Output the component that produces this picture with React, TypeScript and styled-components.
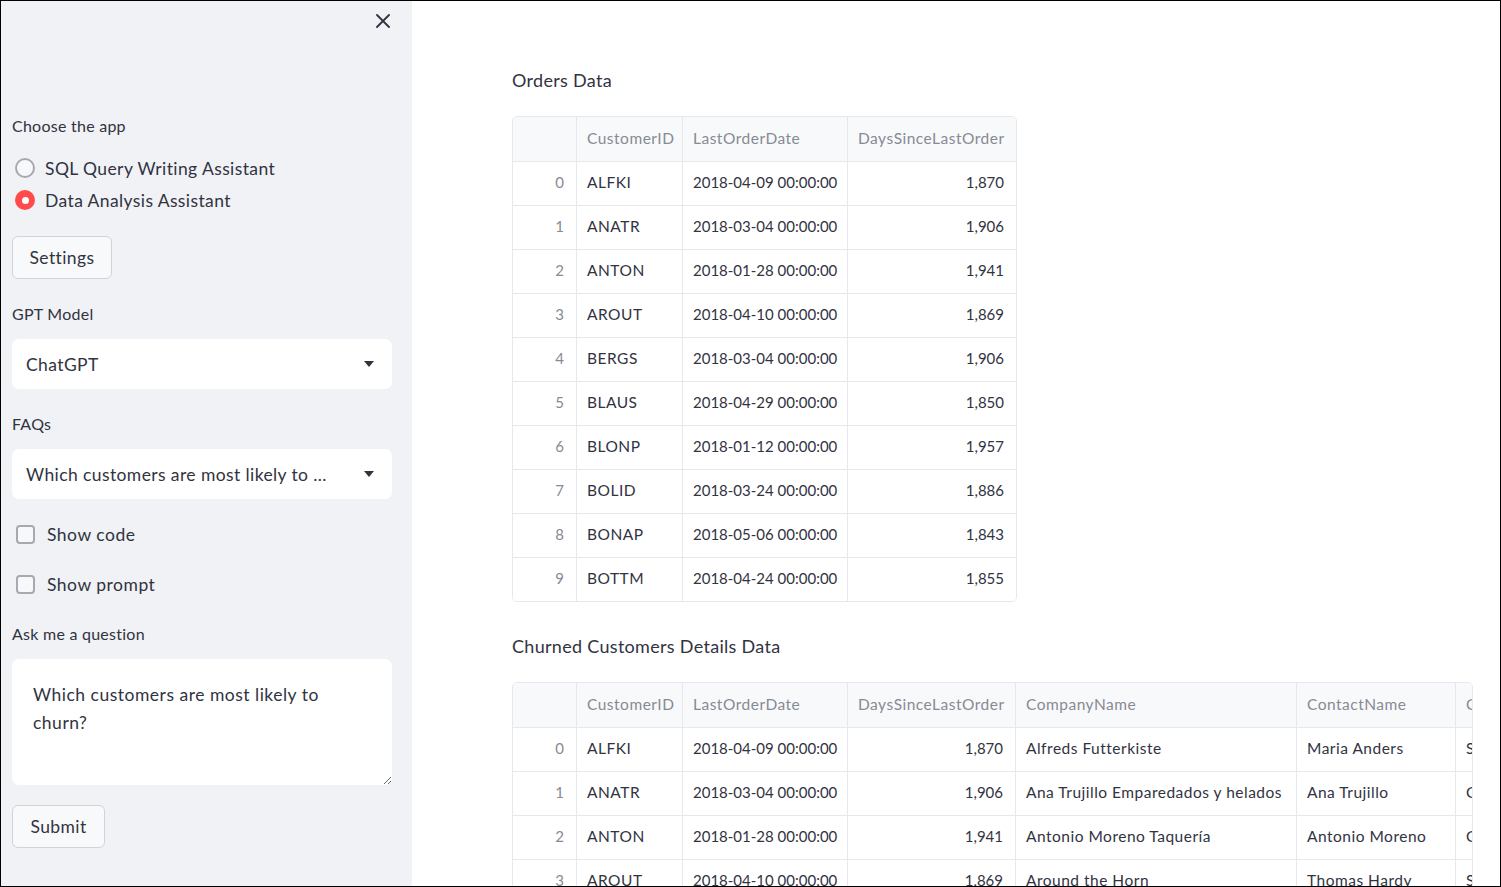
import React from "react";
import styled, { createGlobalStyle } from "styled-components";

const Global = createGlobalStyle`
  html, body { margin: 0; padding: 0; }
  body {
    height: 887px;
    box-sizing: border-box;
    border: 1px solid #000;
    overflow: hidden;
    font-family: Lato, "Noto Sans", sans-serif;
    color: #31333f;
    background: #fff;
  }
  #root { height: 100%; }
`;

const Shell = styled.div`
  display: flex;
  height: 100%;
`;

const Sidebar = styled.aside`
  width: 411px;
  flex: none;
  background: #f0f2f6;
  box-sizing: border-box;
  padding: 0 20px 0 11px;
  display: flex;
  flex-direction: column;
`;

const CloseRow = styled.div`
  display: flex;
  justify-content: flex-end;
  height: 115px;
  padding-top: 13px;
  padding-right: 2px;
  box-sizing: border-box;
`;

const CloseBtn = styled.button`
  border: 0;
  background: transparent;
  padding: 0;
  width: 14px;
  height: 14px;
  color: #31333f;
  display: flex;
`;

const Label = styled.div<{ $mt?: number }>`
  font-size: 16px;
  letter-spacing: 0.25px;
  line-height: 20px;
  margin-top: ${(p) => p.$mt ?? 0}px;
  color: #31333f;
`;

const RadioGroup = styled.div`
  margin-top: 16px;
  display: flex;
  flex-direction: column;
`;

const RadioRow = styled.label`
  display: flex;
  align-items: center;
  height: 32px;
  gap: 10px;
  padding-left: 3px;
  font-size: 17.5px;
  letter-spacing: 0.4px;
`;

const RadioDot = styled.span<{ $on?: boolean }>`
  width: 20px;
  height: 20px;
  box-sizing: border-box;
  border-radius: 50%;
  flex: none;
  display: flex;
  align-items: center;
  justify-content: center;
  background: ${(p) => (p.$on ? "#ff4b4b" : "#f7f8fa")};
  border: ${(p) => (p.$on ? "none" : "2px solid #a7a9b1")};
  &::after {
    content: "";
    display: ${(p) => (p.$on ? "block" : "none")};
    width: 7px;
    height: 7px;
    border-radius: 50%;
    background: #fff;
  }
`;

const Button = styled.button<{ $mt: number; $w: number }>`
  margin-top: ${(p) => p.$mt}px;
  width: ${(p) => p.$w}px;
  height: 43px;
  box-sizing: border-box;
  border: 1px solid #d1d3d8;
  border-radius: 6px;
  background: #f8f9fb;
  font-family: inherit;
  font-size: 17.5px;
  letter-spacing: 0.4px;
  color: #31333f;
  padding: 0;
`;

const Select = styled.div<{ $mt: number }>`
  margin-top: ${(p) => p.$mt}px;
  height: 50px;
  background: #fff;
  border-radius: 7px;
  display: flex;
  align-items: center;
  padding: 0 18px 0 14px;
  gap: 33px;
  font-size: 17.5px;
  letter-spacing: 0.4px;
`;

const SelectValue = styled.span`
  flex: 1;
  min-width: 0;
  white-space: nowrap;
  overflow: hidden;
  text-overflow: ellipsis;
`;

const Caret = styled.span`
  width: 0;
  height: 0;
  flex: none;
  border-left: 5.5px solid transparent;
  border-right: 5.5px solid transparent;
  border-top: 6px solid #31333f;
`;

const CheckRow = styled.label<{ $mt: number }>`
  margin-top: ${(p) => p.$mt}px;
  display: flex;
  align-items: center;
  height: 28px;
  padding-left: 4px;
  gap: 12px;
  font-size: 17.5px;
  letter-spacing: 0.5px;
`;

const CheckBox = styled.span`
  width: 19px;
  height: 19px;
  box-sizing: border-box;
  border: 2px solid #a7a9b1;
  border-radius: 4px;
  background: #f7f8fa;
  flex: none;
`;

const TextArea = styled.textarea`
  margin-top: 15px;
  height: 126px;
  box-sizing: border-box;
  border: 0;
  border-radius: 7px;
  background: #fff;
  padding: 22px 40px 10px 21px;
  font-family: inherit;
  font-size: 17.5px;
  letter-spacing: 0.5px;
  line-height: 28px;
  color: #31333f;
  resize: vertical;
  outline: none;
`;

const Main = styled.main`
  flex: 1;
  min-width: 0;
  padding: 65px 28px 0 100px;
  display: flex;
  flex-direction: column;
`;

const Heading = styled.div<{ $mt: number }>`
  margin-top: ${(p) => p.$mt}px;
  font-size: 18px;
  letter-spacing: 0.3px;
  line-height: 28px;
  color: #31333f;
`;

const TableWrap = styled.div<{ $w?: number }>`
  margin-top: 22px;
  border: 1px solid #e6e8ed;
  border-radius: 5px;
  overflow: hidden;
  width: ${(p) => (p.$w ? `${p.$w}px` : "fit-content")};
  flex: none;
`;

const Row = styled.div<{ $cols: string; $head?: boolean }>`
  display: grid;
  grid-template-columns: ${(p) => p.$cols};
  height: 44px;
  box-sizing: border-box;
  border-top: ${(p) => (p.$head ? "none" : "1px solid #e6e8ed")};
  background: ${(p) => (p.$head ? "#f8f9fb" : "#fff")};
  width: max-content;
`;

const Cell = styled.div<{ $align?: "left" | "right"; $muted?: boolean; $first?: boolean; $digits?: boolean }>`
  box-sizing: border-box;
  border-left: ${(p) => (p.$first ? "none" : "1px solid #e6e8ed")};
  display: flex;
  align-items: center;
  justify-content: ${(p) => (p.$align === "right" ? "flex-end" : "flex-start")};
  padding: 0 12px 3px 10px;
  font-size: ${(p) => (p.$digits ? "15px" : "15.5px")};
  letter-spacing: ${(p) => (p.$digits ? "0" : "0.5px")};
  white-space: nowrap;
  overflow: hidden;
  color: ${(p) => (p.$muted ? "#878a93" : "#31333f")};
`;

const ordersCols = "63px 106px 165px 169px";
const churnCols = "63px 106px 165px 168px 281px 159px 220px";

const orders: [string, string, string][] = [
  ["ALFKI", "2018-04-09 00:00:00", "1,870"],
  ["ANATR", "2018-03-04 00:00:00", "1,906"],
  ["ANTON", "2018-01-28 00:00:00", "1,941"],
  ["AROUT", "2018-04-10 00:00:00", "1,869"],
  ["BERGS", "2018-03-04 00:00:00", "1,906"],
  ["BLAUS", "2018-04-29 00:00:00", "1,850"],
  ["BLONP", "2018-01-12 00:00:00", "1,957"],
  ["BOLID", "2018-03-24 00:00:00", "1,886"],
  ["BONAP", "2018-05-06 00:00:00", "1,843"],
  ["BOTTM", "2018-04-24 00:00:00", "1,855"],
];

const churn: [string, string, string, string, string, string][] = [
  ["ALFKI", "2018-04-09 00:00:00", "1,870", "Alfreds Futterkiste", "Maria Anders", "Sales Representative"],
  ["ANATR", "2018-03-04 00:00:00", "1,906", "Ana Trujillo Emparedados y helados", "Ana Trujillo", "Owner"],
  ["ANTON", "2018-01-28 00:00:00", "1,941", "Antonio Moreno Taquería", "Antonio Moreno", "Owner"],
  ["AROUT", "2018-04-10 00:00:00", "1,869", "Around the Horn", "Thomas Hardy", "Sales Representative"],
];

const CloseIcon = () => (
  <svg width="14" height="14" viewBox="0 0 14 14" fill="none" stroke="currentColor" strokeWidth="1.8" strokeLinecap="round">
    <path d="M1 1 L13 13 M13 1 L1 13" />
  </svg>
);

export default function App() {
  return (
    <>
      <Global />
      <Shell>
        <Sidebar>
          <CloseRow>
            <CloseBtn aria-label="Close sidebar">
              <CloseIcon />
            </CloseBtn>
          </CloseRow>
          <Label>Choose the app</Label>
          <RadioGroup>
            <RadioRow>
              <RadioDot />
              SQL Query Writing Assistant
            </RadioRow>
            <RadioRow>
              <RadioDot $on />
              Data Analysis Assistant
            </RadioRow>
          </RadioGroup>
          <Button $mt={20} $w={100}>Settings</Button>
          <Label $mt={25}>GPT Model</Label>
          <Select $mt={15}>
            <SelectValue>ChatGPT</SelectValue>
            <Caret />
          </Select>
          <Label $mt={25}>FAQs</Label>
          <Select $mt={15}>
            <SelectValue>Which customers are most likely to churn?</SelectValue>
            <Caret />
          </Select>
          <CheckRow $mt={21}>
            <CheckBox />
            Show code
          </CheckRow>
          <CheckRow $mt={22}>
            <CheckBox />
            Show prompt
          </CheckRow>
          <Label $mt={26}>Ask me a question</Label>
          <TextArea defaultValue="Which customers are most likely to churn?" />
          <Button $mt={20} $w={93}>Submit</Button>
        </Sidebar>
        <Main>
          <Heading $mt={0}>Orders Data</Heading>
          <TableWrap>
            <Row $cols={ordersCols} $head>
              <Cell $first />
              <Cell $muted>CustomerID</Cell>
              <Cell $muted>LastOrderDate</Cell>
              <Cell $muted>DaysSinceLastOrder</Cell>
            </Row>
            {orders.map((r, i) => (
              <Row key={i} $cols={ordersCols}>
                <Cell $first $muted $digits $align="right">{i}</Cell>
                <Cell>{r[0]}</Cell>
                <Cell $digits>{r[1]}</Cell>
                <Cell $digits $align="right">{r[2]}</Cell>
              </Row>
            ))}
          </TableWrap>
          <Heading $mt={30}>Churned Customers Details Data</Heading>
          <TableWrap $w={959}>
            <Row $cols={churnCols} $head>
              <Cell $first />
              <Cell $muted>CustomerID</Cell>
              <Cell $muted>LastOrderDate</Cell>
              <Cell $muted>DaysSinceLastOrder</Cell>
              <Cell $muted>CompanyName</Cell>
              <Cell $muted>ContactName</Cell>
              <Cell $muted>ContactTitle</Cell>
            </Row>
            {churn.map((r, i) => (
              <Row key={i} $cols={churnCols}>
                <Cell $first $muted $digits $align="right">{i}</Cell>
                <Cell>{r[0]}</Cell>
                <Cell $digits>{r[1]}</Cell>
                <Cell $digits $align="right">{r[2]}</Cell>
                <Cell>{r[3]}</Cell>
                <Cell>{r[4]}</Cell>
                <Cell>{r[5]}</Cell>
              </Row>
            ))}
          </TableWrap>
        </Main>
      </Shell>
    </>
  );
}
